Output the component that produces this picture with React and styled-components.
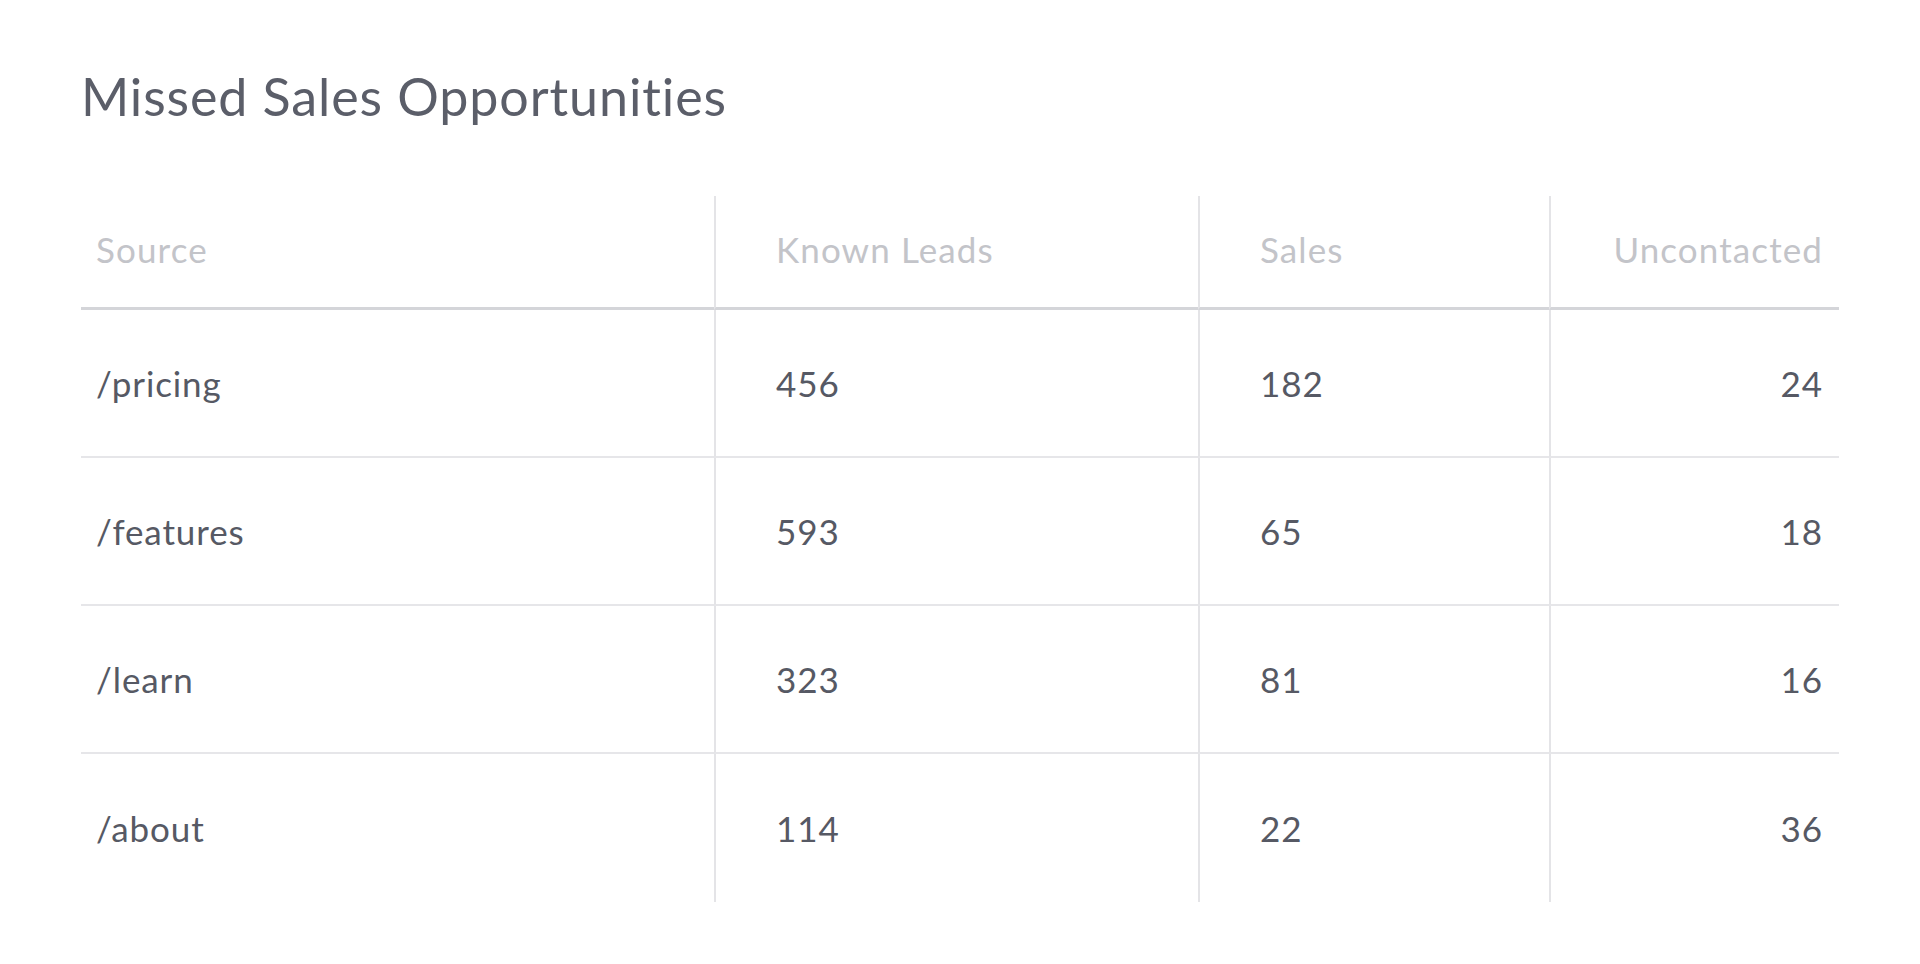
import React from 'react';
import styled, { createGlobalStyle } from 'styled-components';

const GlobalStyle = createGlobalStyle`
  body {
    margin: 0;
    background: #ffffff;
    font-family: Lato, "Open Sans", sans-serif;
  }
`;

const columns = [
  { key: 'source', label: 'Source', pad: '0 0 0 15px', align: 'left' },
  { key: 'leads', label: 'Known Leads', pad: '0 0 0 60px', align: 'left' },
  { key: 'sales', label: 'Sales', pad: '0 0 0 60px', align: 'left' },
  { key: 'uncontacted', label: 'Uncontacted', pad: '0 16px 0 0', align: 'right' },
];

const rows = [
  { source: '/pricing', leads: 456, sales: 182, uncontacted: 24 },
  { source: '/features', leads: 593, sales: 65, uncontacted: 18 },
  { source: '/learn', leads: 323, sales: 81, uncontacted: 16 },
  { source: '/about', leads: 114, sales: 22, uncontacted: 36 },
];

function App() {
  return (
    <Page>
      <GlobalStyle />
      <Title>Missed Sales Opportunities</Title>
      <Table>
        {columns.map((c, i) => (
          <HeadCell key={c.key} $pad={c.pad} $align={c.align} $first={i === 0}>
            {c.label}
          </HeadCell>
        ))}
        {rows.map((r, ri) =>
          columns.map((c, i) => (
            <Cell
              key={c.key + ri}
              $pad={c.pad}
              $align={c.align}
              $first={i === 0}
              $last={ri === rows.length - 1}
            >
              {r[c.key]}
            </Cell>
          ))
        )}
      </Table>
    </Page>
  );
}

export default App;

const Page = styled.div`
  padding: 65px 81px 64px 81px;
`;

const Title = styled.h1`
  margin: 0;
  font-size: 52px;
  line-height: 62px;
  font-weight: 400;
  color: #5b5e69;
  letter-spacing: 0.9px;
`;

const Table = styled.div`
  display: grid;
  grid-template-columns: 633px 484px 351px 290px;
  grid-template-rows: 114px repeat(4, 148px);
  margin-top: 69px;
  width: 1758px;
`;

const BaseCell = styled.div`
  display: flex;
  align-items: center;
  justify-content: ${(p) => (p.$align === 'right' ? 'flex-end' : 'flex-start')};
  padding: ${(p) => p.$pad};
  border-left: ${(p) => (p.$first ? 'none' : '2px solid #e4e4e7')};
  font-size: 35px;
  letter-spacing: 0.9px;
`;

const HeadCell = styled(BaseCell)`
  color: #c3c4c9;
  border-bottom: 3px solid #d4d5d9;
  padding-bottom: 5px;
  letter-spacing: 1.1px;
`;

const Cell = styled(BaseCell)`
  color: #565964;
  border-bottom: ${(p) => (p.$last ? 'none' : '2px solid #e6e6e9')};
`;
